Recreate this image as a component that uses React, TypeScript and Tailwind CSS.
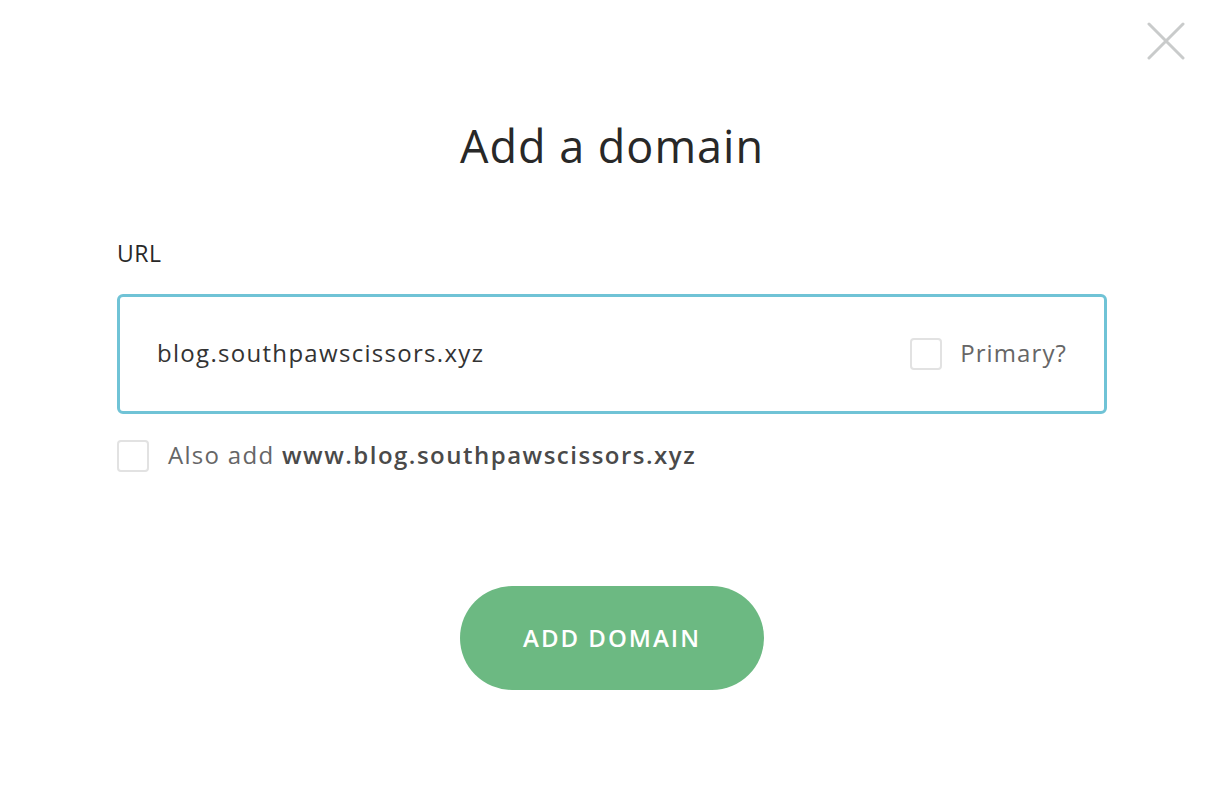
import React from "react";

export default function App() {
  return (
    <div
      className="relative w-[1222px] h-[806px] bg-white overflow-hidden"
      style={{ fontFamily: "'Open Sans', 'Noto Sans', sans-serif" }}
    >
      <button className="absolute left-[1146px] top-[22px] w-[40px] h-[38px] flex items-center justify-center">
        <svg width="38" height="38" viewBox="0 0 38 38">
          <path d="M2 2 L36 36 M36 2 L2 36" stroke="#c9cbcb" strokeWidth="3" strokeLinecap="round" />
        </svg>
      </button>

      <div className="flex flex-col pt-[118px] pl-[117px] w-[1107px]">
        <h1 className="text-center text-[45px] leading-[56px] text-[#282828] font-normal tracking-[1px]">Add a domain</h1>

        <label className="mt-[64px] text-[23px] leading-[30px] text-[#282828] tracking-[0.5px]">URL</label>

        <div className="mt-[26px] h-[120px] border-[3px] border-[#70c3d6] rounded-[6px] flex items-center pl-[37px] pr-[37px]">
          <span className="flex-1 text-[24px] text-[#333] pb-[3px] tracking-[1.3px]">blog.southpawscissors.xyz</span>
          <span className="w-[32px] h-[32px] border-2 border-[#e2e2e2] rounded-[4px]"></span>
          <span className="ml-[18px] text-[24px] text-[#666] pb-[2px] tracking-[1.1px]">Primary?</span>
        </div>

        <div className="mt-[23px] flex items-center">
          <span className="w-[32px] h-[32px] border-2 border-[#e2e2e2] rounded-[4px]"></span>
          <span className="ml-[19px] text-[24px] text-[#666] pb-[2px] tracking-[1.3px]">
            Also add <span className="font-semibold text-[#4a4a4a] tracking-[1.5px]">www.blog.southpawscissors.xyz</span>
          </span>
        </div>

        <div className="mt-[111px] flex justify-center">
          <button className="w-[304px] h-[104px] rounded-full bg-[#6cb982] text-white text-[24px] font-semibold tracking-[2px]">
            ADD DOMAIN
          </button>
        </div>
      </div>
    </div>
  );
}
